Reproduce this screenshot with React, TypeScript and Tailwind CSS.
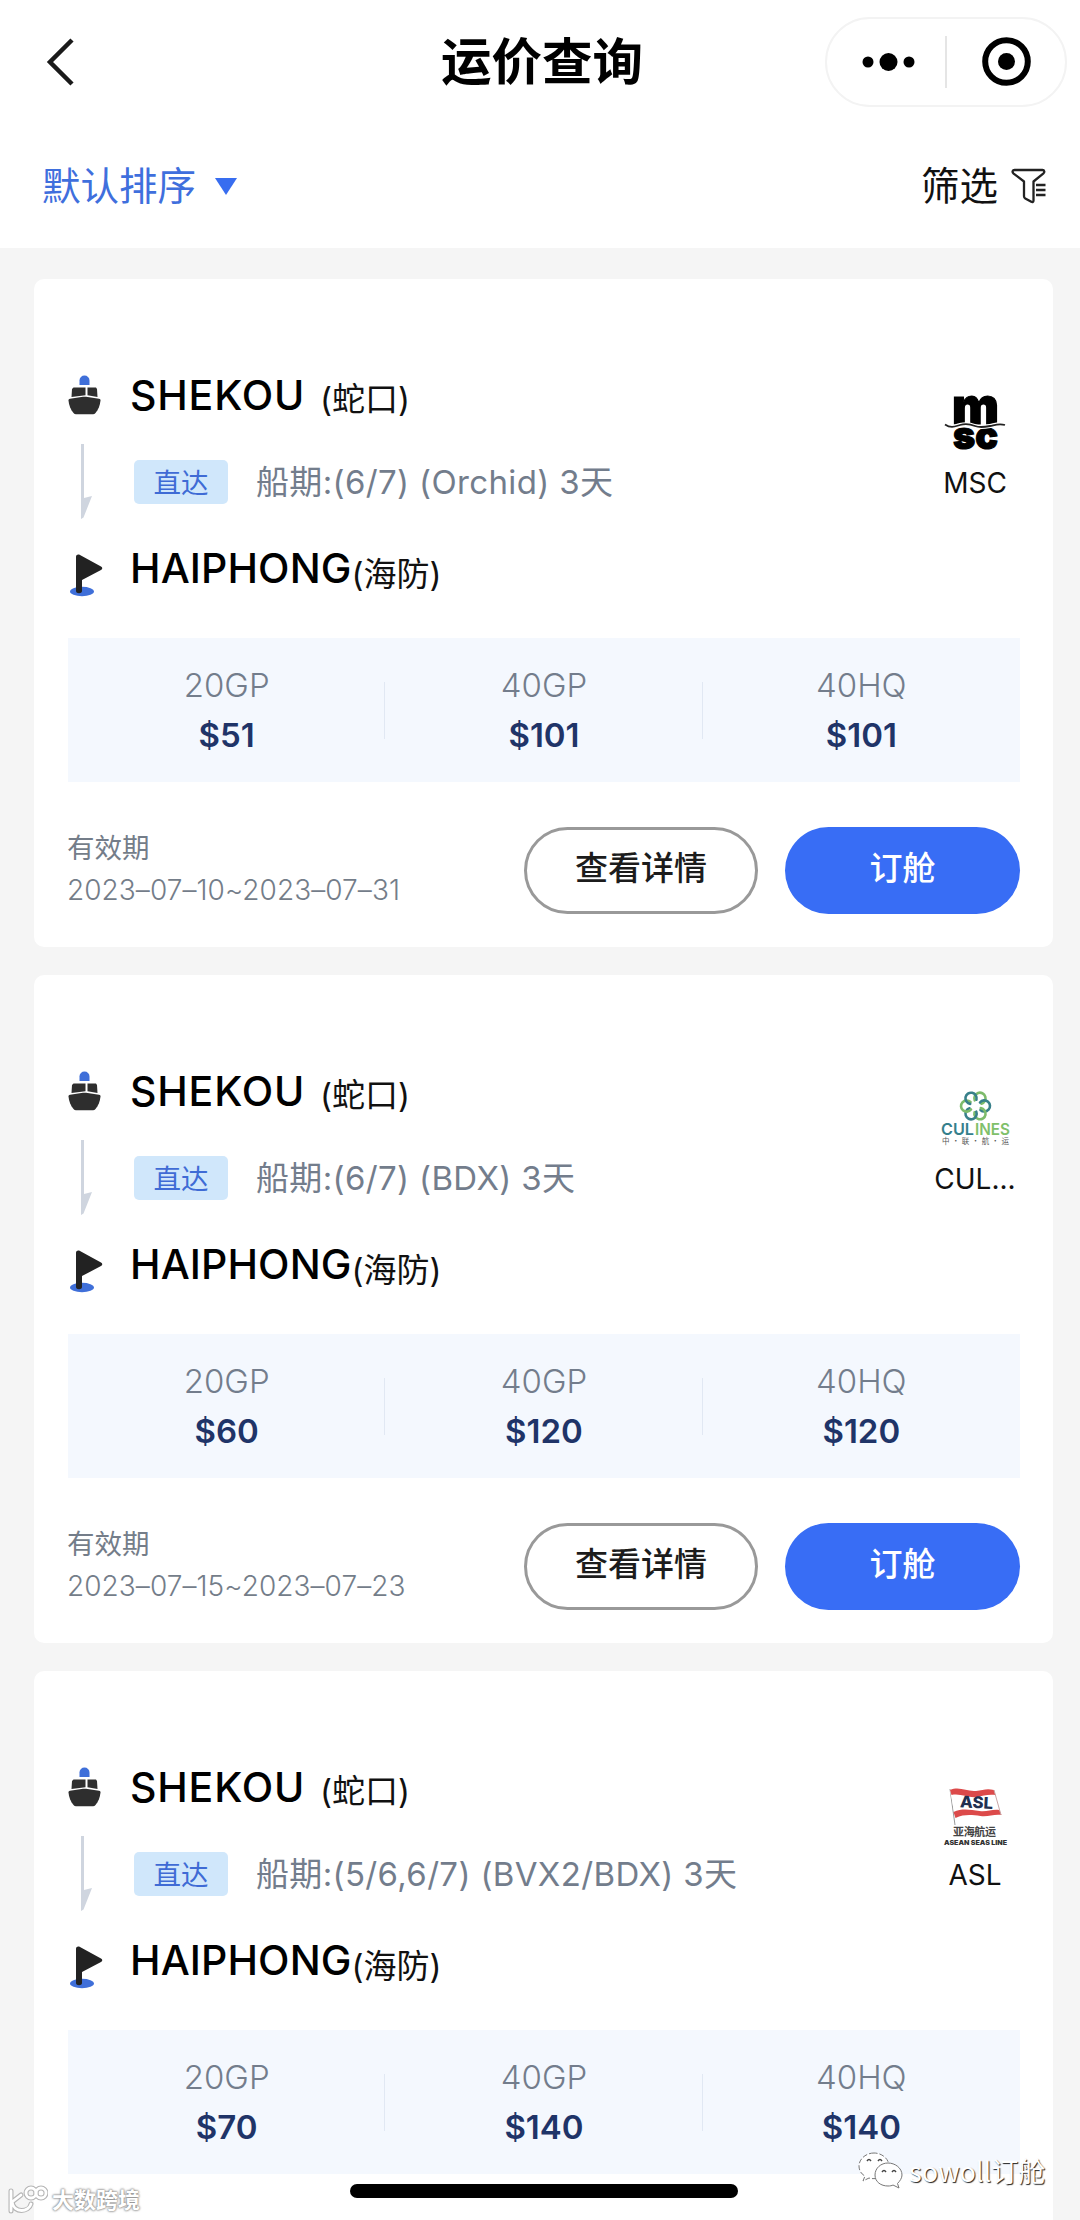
import type { ReactNode } from 'react'

type Quote = {
  id: string
  carrier: string
  logo: ReactNode
  schedule: string
  prices: { type: string; price: string }[]
  validity?: string
}

function MscLogo() {
  return (
    <svg viewBox="0 0 70 70" className="w-[70px] h-[70px] overflow-visible" aria-hidden="true">
      <g fontFamily="Inter, sans-serif" fontWeight="900" fill="#000" stroke="#000" strokeWidth="1.2">
        <text x="12" y="33" fontSize="50" textLength="47" lengthAdjust="spacingAndGlyphs">m</text>
        <text x="13" y="58" fontSize="39" textLength="45" lengthAdjust="spacingAndGlyphs">sc</text>
      </g>
      <path d="M5 33.500c6 4 10 2 15 .5s10-1 15 1 10 1 15 0 9-3 15-1" fill="none" stroke="#fff" strokeWidth="4" />
      <path d="M5 33.500c6 4 10 2 15 .5s10-1 15 1 10 1 15 0 9-3 15-1" fill="none" stroke="#222" strokeWidth="1.800" />
    </svg>
  )
}

function CulLogo() {
  const petals = [0, 60, 120, 180, 240, 300]
  return (
    <svg viewBox="0 0 70 70" className="w-[70px] h-[70px] overflow-visible" aria-hidden="true">
      <g transform="translate(35.5 19)" fill="none" strokeWidth="2.6" strokeLinecap="round">
        {petals.map((a, i) => (
          <path
            key={a}
            d="M-3.500 -4.500A5.600 5.600 0 1 1 4 -5"
            stroke={i % 2 ? '#38808a' : '#7dbb6b'}
            transform={`rotate(${a + 30})`}
          />
        ))}
      </g>
      <text x="1" y="48" fontFamily="Inter, sans-serif" fontWeight="600" fontSize="16.5" textLength="33" lengthAdjust="spacingAndGlyphs" fill="#35808c">CUL</text>
      <text x="35" y="48" fontFamily="Inter, sans-serif" fontWeight="600" fontSize="16.5" textLength="35" lengthAdjust="spacingAndGlyphs" fill="#80c06a">INES</text>
      <text x="2" y="57" fontFamily="'Noto Sans CJK SC', sans-serif" fontSize="7.5" textLength="67" fill="#555">中·联·航·运</text>
    </svg>
  )
}

function AslLogo() {
  return (
    <svg viewBox="0 0 70 70" className="w-[70px] h-[70px] overflow-visible" aria-hidden="true">
      <path d="M10 6L15 42" stroke="#999" strokeWidth="1" />
      <path d="M10 7c10-4 17 2 26 1 7-1 11-3 18-1l7 25c-8-2-13 2-21 1-9-1-15-3-25 1z" fill="#fff" />
      <path d="M10 7c10-4 17 2 26 1 7-1 11-3 18-1l1.500 5c-8-1-12 1-19 2-9 1-16-4-25-2z" fill="#dc4a4a" />
      <path d="M13.500 29c9-4 17-2 26-1 8 1 12-2 20-1l2 5c-8-1-13 2-21 1-9-1-16-2-25 2z" fill="#dc4a4a" />
      <path d="M54 7l7 25" stroke="#c9a6a6" strokeWidth="1" />
      <text x="20" y="25" fontFamily="Inter, sans-serif" fontWeight="800" fontSize="16" textLength="33" lengthAdjust="spacingAndGlyphs" fill="#223050" transform="rotate(3 36 20)">ASL</text>
      <text x="13" y="53" fontFamily="'Noto Sans CJK SC', sans-serif" fontWeight="700" fontSize="11" textLength="43" fill="#444">亚海航运</text>
      <text x="4" y="62" fontFamily="Inter, sans-serif" fontWeight="900" fontSize="6.5" textLength="63" lengthAdjust="spacingAndGlyphs" fill="#333">ASEAN SEAS LINE</text>
    </svg>
  )
}

function ShipIcon() {
  return (
    <svg viewBox="0 0 33 40" className="w-[33px] h-[40px]" aria-hidden="true">
      <path d="M11.500 10V5.500a5 5 0 0 1 10 0V10z" fill="#3f6fd9" />
      <path d="M5.500 12.500h12v7.800L3.500 22l.5-8z" fill="#2e2e2e" />
      <path d="M19.500 12.500H28l1 1.500.5 8-10-1.700z" fill="#2e2e2e" />
      <path d="M.5 25.500c0-1 .5-1.500 1.500-1.700l13-2h3l13 2c1 .2 1.500.7 1.500 1.700-.5 5-2 9-5 12.500-.7.800-1.500 1.200-2.500 1.200H8c-1 0-1.800-.4-2.500-1.200-3-3.500-4.500-7.500-5-12.500z" fill="#2e2e2e" />
    </svg>
  )
}

function FlagIcon() {
  return (
    <svg viewBox="0 0 33 43" className="w-[33px] h-[43px]" aria-hidden="true">
      <ellipse cx="12" cy="37.500" rx="12" ry="4.700" fill="#3f6fd9" />
      <path d="M6 3c0-2.200 2-3 4-2l21 11.500c1.700 1 1.700 2.600 0 3.600L12 26v11c0 3-6 3-6 0z" fill="#222" />
    </svg>
  )
}

function FilterIcon() {
  return (
    <svg viewBox="0 0 35 36" className="w-[35px] h-[36px]" fill="none" stroke="#222" strokeWidth="2.300" strokeLinejoin="round" aria-hidden="true">
      <path d="M3.500 2h28c2 0 2.300 2 1 3.300L22.500 13.500v19c0 1.500-1 2-2.200 1.300l-6-3.400c-1-.6-1.300-1.200-1.300-2.200V13.500L2.300 5.300C1 4 1.500 2 3.500 2z" />
      <path d="M25 17h9.500M25 22h9.500M25 27h9.500" strokeWidth="2.600" />
    </svg>
  )
}

const quotes: Quote[] = [
  {
    id: 'msc',
    carrier: 'MSC',
    logo: <MscLogo />,
    schedule: '船期:(6/7) (Orchid) 3天',
    prices: [
      { type: '20GP', price: '$51' },
      { type: '40GP', price: '$101' },
      { type: '40HQ', price: '$101' },
    ],
    validity: '2023–07–10~2023–07–31',
  },
  {
    id: 'cul',
    carrier: 'CUL...',
    logo: <CulLogo />,
    schedule: '船期:(6/7) (BDX) 3天',
    prices: [
      { type: '20GP', price: '$60' },
      { type: '40GP', price: '$120' },
      { type: '40HQ', price: '$120' },
    ],
    validity: '2023–07–15~2023–07–23',
  },
  {
    id: 'asl',
    carrier: 'ASL',
    logo: <AslLogo />,
    schedule: '船期:(5/6,6/7) (BVX2/BDX) 3天',
    prices: [
      { type: '20GP', price: '$70' },
      { type: '40GP', price: '$140' },
      { type: '40HQ', price: '$140' },
    ],
  },
]

function QuoteCard({ quote }: { quote: Quote }) {
  return (
    <div className="h-[668px] shrink-0 bg-white rounded-[10px] pl-[34px] pr-[33px] pt-[91px]">
      <div className="flex justify-between h-[224px]">
        {/* Itinéraire */}
        <div>
          <div className="flex items-center h-[50px]">
            <div className="w-[62px]">
              <ShipIcon />
            </div>
            <span className="text-[41px] leading-[50px] tracking-[0.8px] font-medium text-black">SHEKOU</span>
            <span className="ml-[15px] mt-[7px] text-[33px] leading-[44px] text-[#111]">(蛇口)</span>
          </div>
          <div className="flex items-center h-[75px] mt-6">
            <div className="w-[66px] pl-[13px]">
              <svg viewBox="0 0 12 75" className="w-[12px] h-[75px]" aria-hidden="true">
                <path d="M0 0h3v54l8-2L2.500 73.500 0 75z" fill="#cfd5df" />
              </svg>
            </div>
            <span className="w-[94px] h-[44px] rounded-[5px] bg-[#d0e7fb] text-[#3f6bd5] text-[27.500px] leading-[46px] text-center">直达</span>
            <span className="ml-[28px] text-[33px] leading-[44px] tracking-[0.350px] text-[#737d8c] whitespace-nowrap">{quote.schedule}</span>
          </div>
          <div className="flex items-center h-[50px] mt-[26px]">
            <div className="w-[62px] pl-[2px] pt-[10px]">
              <FlagIcon />
            </div>
            <span className="text-[41px] leading-[50px] tracking-[0.100px] font-medium text-black -mt-[4px]">HAIPHONG</span>
            <span className="mt-[7px] text-[33px] leading-[44px] text-[#111]">(海防)</span>
          </div>
        </div>

        {/* Compagnie */}
        <div className="w-[90px] pt-[21px] flex flex-col items-center">
          {quote.logo}
          <span className="mt-[2px] text-[28px] leading-[40px] text-[#111]">{quote.carrier}</span>
        </div>
      </div>

      {/* Tarifs */}
      <div className="mt-[44px] h-[144px] bg-[#f4f8fe] grid grid-cols-3 items-center">
        {quote.prices.map((p, i) => (
          <div key={p.type} className="relative flex flex-col items-center -mt-px">
            <span className="text-[33px] leading-[50px] font-[330] text-[#737d8c]">{p.type}</span>
            <span className="text-[33px] leading-[50px] font-semibold text-[#1f3468]">{p.price}</span>
            {i < 2 && <span className="absolute right-0 top-[22px] h-[57px] w-px bg-[#e1e8f3]" />}
          </div>
        ))}
      </div>

      {quote.validity && (
        <div className="mt-[45px] h-[87px] flex items-center">
          <div className="flex-1 -ml-px -mt-[4px] text-[27.500px] leading-[42px] text-[#747d89]">
            <div>有效期</div>
            <div className="text-[28px] tracking-[0.060px] font-[350] whitespace-nowrap">{quote.validity}</div>
          </div>
          <button className="w-[234px] h-[87px] rounded-full border-[3px] border-[#999] text-[33px] font-medium text-[#1c1c1c] pb-[4px]">
            查看详情
          </button>
          <button className="ml-[27px] w-[235px] h-[87px] rounded-full bg-[#386df5] text-[33px] font-medium text-white pb-[4px]">
            订舱
          </button>
        </div>
      )}
    </div>
  )
}

export default function App() {
  return (
    <div className="relative w-[1080px] h-[2220px] overflow-hidden bg-[#f5f5f5] font-['Inter','Noto_Sans_CJK_SC',sans-serif]">
      <header className="h-[248px] bg-white">
        <div className="h-[124px] flex items-center pl-[46px] pr-[13px]">
          <svg viewBox="0 0 29 50" className="w-[29px] h-[50px]" fill="none" stroke="#1a1a1a" strokeWidth="4.500" aria-hidden="true">
            <path d="M26 3L4 25l22 22" />
          </svg>
          <h1 className="ml-[366px] text-[50.500px] leading-[60px] font-bold text-black">运价查询</h1>
          <div className="ml-auto w-[242px] h-[90px] rounded-full border-2 border-[#f3f3f3] flex items-center">
            <svg viewBox="0 0 238 86" className="w-[238px] h-[86px]" aria-hidden="true">
              <circle cx="41" cy="43" r="5.500" />
              <circle cx="61.500" cy="43" r="9" />
              <circle cx="82" cy="43" r="5.500" />
              <path d="M119 17v52" stroke="#dcdcdc" strokeWidth="1.500" />
              <circle cx="179.500" cy="42.500" r="21.300" fill="none" stroke="#000" strokeWidth="6" />
              <circle cx="179.500" cy="42.500" r="8.500" />
            </svg>
          </div>
        </div>
        <div className="h-[124px] flex items-center justify-between pl-[42px] pr-[34px]">
          <div className="flex items-center text-[38.500px] leading-[56px] text-[#3f6fdd]">
            默认排序
            <svg viewBox="0 0 22 17" className="ml-[19px] w-[22px] h-[17px]" aria-hidden="true">
              <path d="M0 0h22L11 17z" fill="#386df0" />
            </svg>
          </div>
          <div className="flex items-center text-[38.500px] leading-[56px] text-[#111]">
            筛选
            <span className="ml-[13px]">
              <FilterIcon />
            </span>
          </div>
        </div>
      </header>

      <main className="flex flex-col gap-7 pt-[31px] pl-[34px] pr-[27px]">
        {quotes.map((q) => (
          <QuoteCard key={q.id} quote={q} />
        ))}
      </main>

      {/* Barre d'accueil */}
      <div className="absolute left-[350px] top-[2184px] w-[388px] h-[14px] rounded-full bg-black" />

      {/* Filigranes */}
      <div className="absolute left-[8px] top-[2184px] flex items-center gap-[4px]">
        <svg viewBox="0 0 40 32" className="w-[40px] h-[32px]" fill="none" strokeLinecap="round" aria-hidden="true">
          <g stroke="#b5b5b5" strokeWidth="5">
            <path d="M3 7v20M13 11L4 18c2 12 17 10 19 2" />
            <circle cx="23" cy="9" r="5" />
            <circle cx="33" cy="9" r="5" />
          </g>
          <g stroke="#fff" strokeWidth="2.800">
            <path d="M3 7v20M13 11L4 18c2 12 17 10 19 2" />
            <circle cx="23" cy="9" r="5" />
            <circle cx="33" cy="9" r="5" />
          </g>
        </svg>
        <span className="text-[22px] leading-[32px] font-bold text-white [text-shadow:0_0_2px_#888,0_0_2px_#999,0_0_3px_#aaa]">大数跨境</span>
      </div>
      <div className="absolute left-[858px] top-[2151px] flex items-center">
        <svg viewBox="0 0 46 40" className="w-[46px] h-[40px]" fill="#fff" stroke="#777" strokeWidth="1" aria-hidden="true">
          <path d="M16 2C8 2 1 8 1 15c0 4 2 8 6 10l-2 5 6-3c2 .6 4 .8 6 .6C25 27 31 22 31 15S24 2 16 2z" strokeDasharray="5 2" />
          <path d="M30 12c-7 0-13 5-13 12s6 11 13 11c2 0 4-.3 5-1l6 3-1.500-4.500C42 30 44 27 44 24c0-7-7-12-14-12z" />
          <path d="M9 10q2-3 4 0M20 10q2-3 4 0M24 21q2-3 4 0M34 21q2-3 4 0" fill="none" stroke="#444" strokeWidth="1.400" />
        </svg>
        <span className="ml-[5px] text-[27px] leading-[40px] text-white font-['Noto_Sans_CJK_SC',sans-serif] [text-shadow:1px_1px_1px_#222]">sowoll订舱</span>
      </div>
    </div>
  )
}
